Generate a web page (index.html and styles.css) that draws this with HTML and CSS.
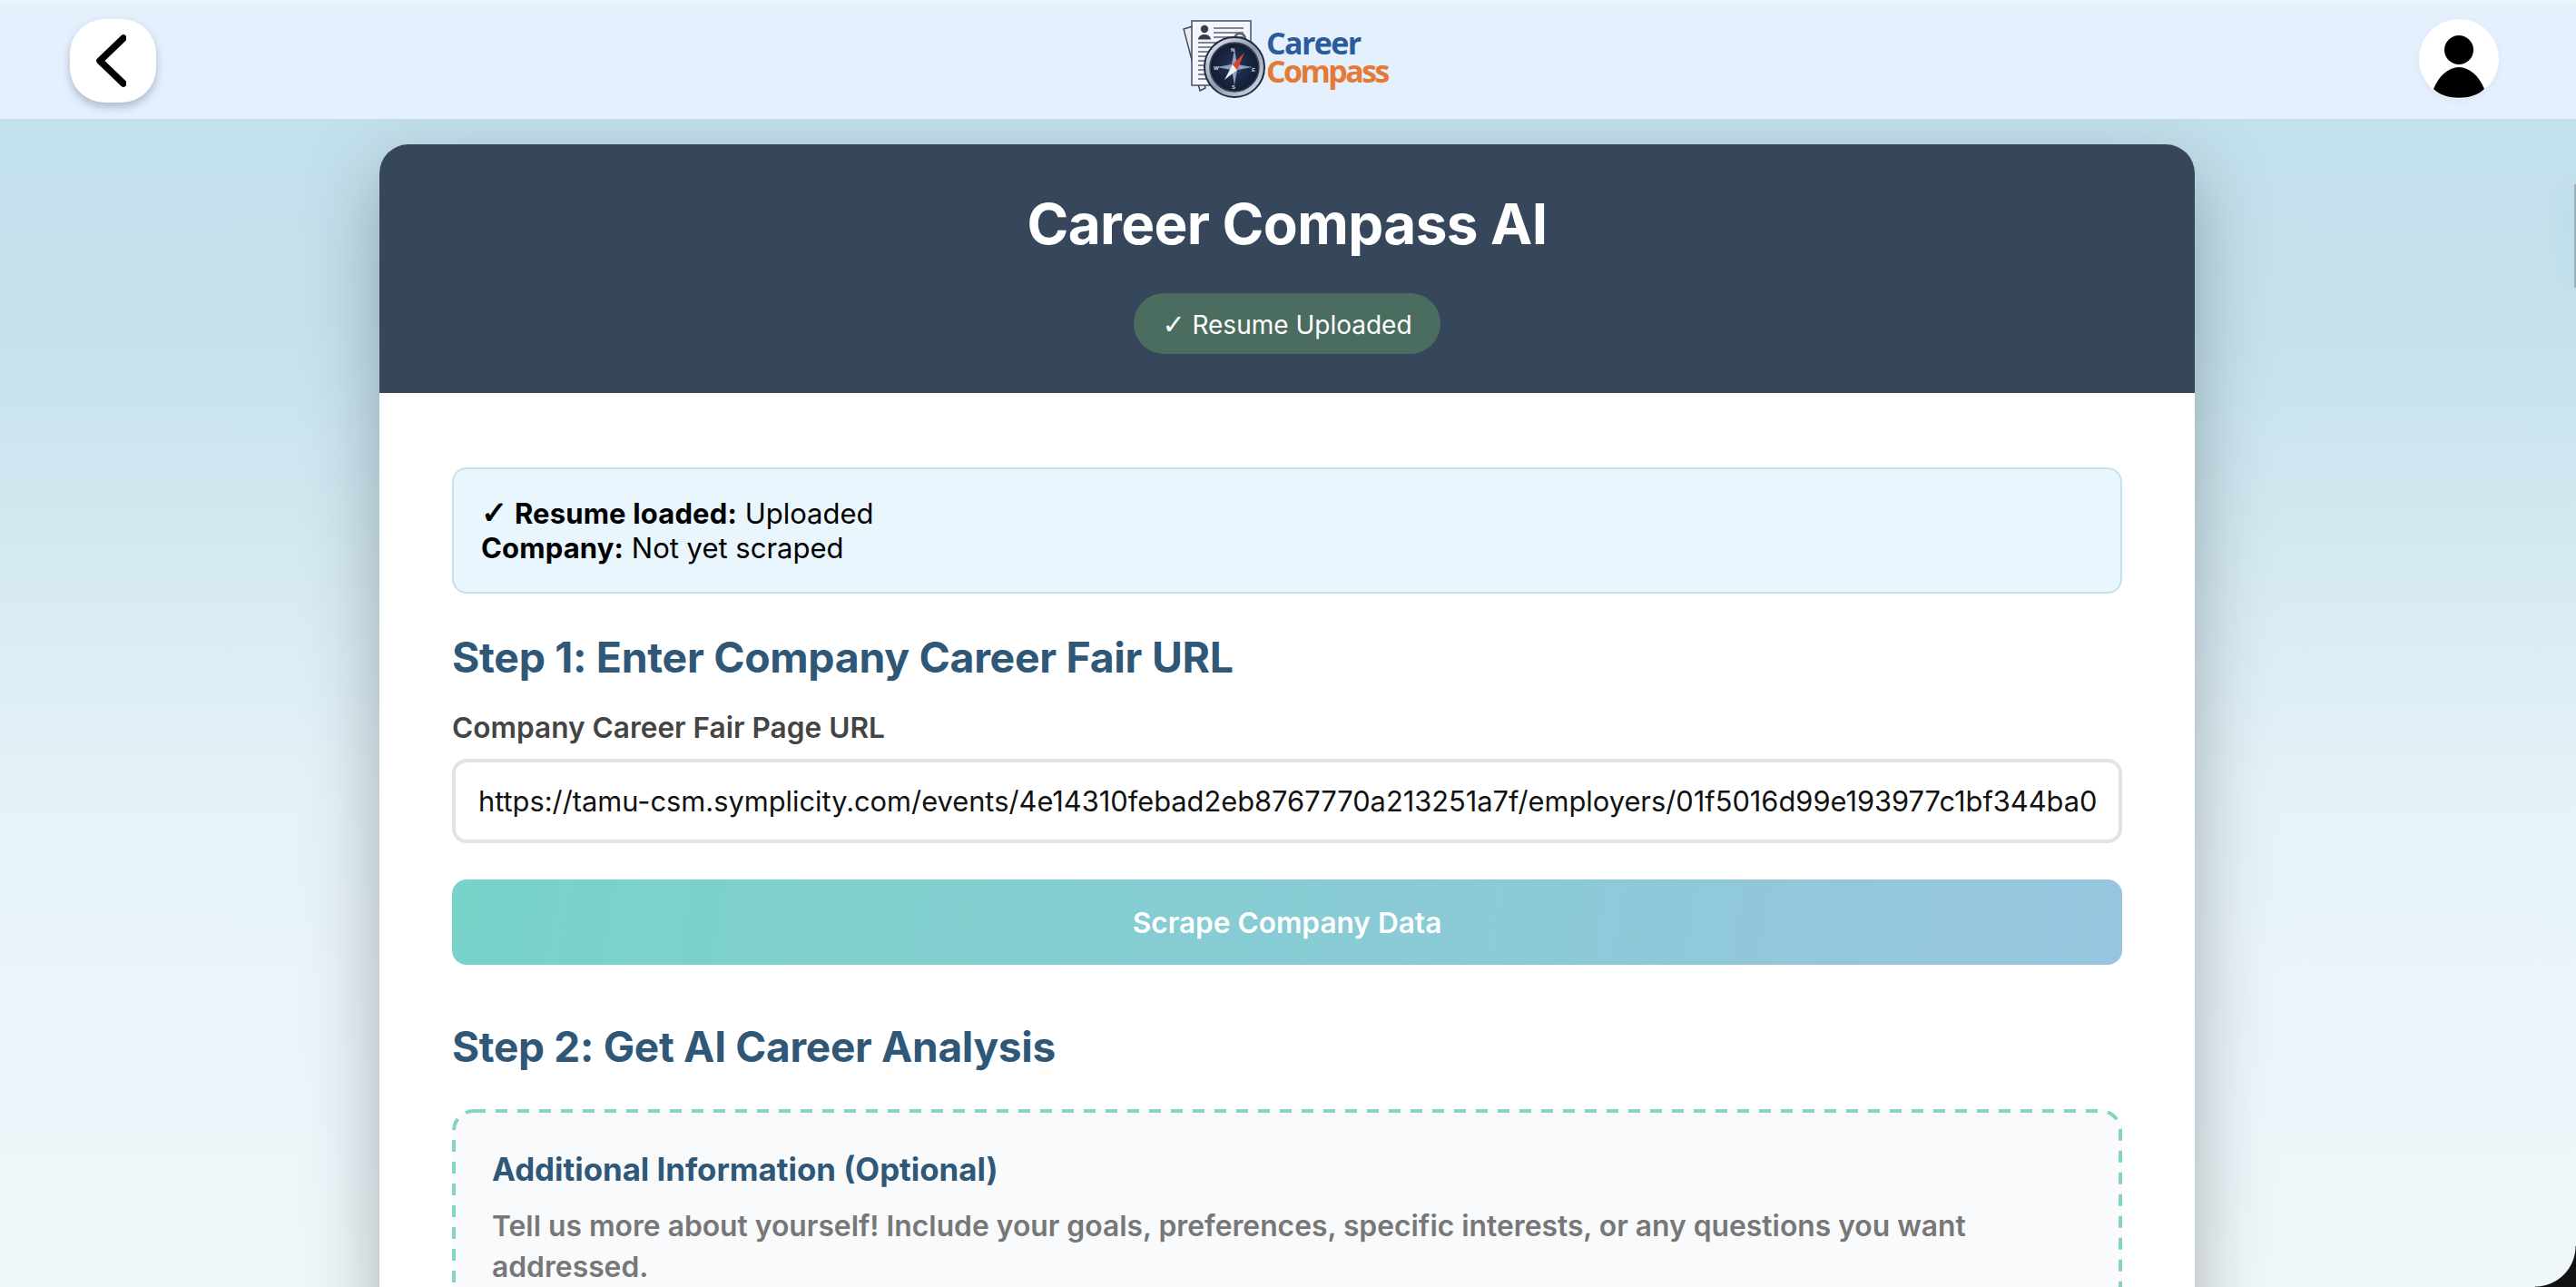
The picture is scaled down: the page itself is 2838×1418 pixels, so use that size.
FILE: index.html
```html
<!DOCTYPE html>
<html lang="en">
<head>
<meta charset="utf-8">
<title>Career Compass AI</title>
<link rel="stylesheet" href="styles.css">
</head>
<body>
<header class="topbar">
  <button class="back" aria-label="Back">
    <svg width="36" height="58" viewBox="0 0 36 58"><path d="M33 4 L7 29 L33 54" fill="none" stroke="#000" stroke-width="7.5" stroke-linecap="round" stroke-linejoin="round"/></svg>
  </button>
  <div class="logo">
    <svg class="logo-art" width="92" height="88" viewBox="0 0 92 88">
      <defs>
        <linearGradient id="bezel" x1="0" y1="0" x2="1" y2="1">
          <stop offset="0" stop-color="#f2f4f7"/>
          <stop offset="0.5" stop-color="#8f98a8"/>
          <stop offset="1" stop-color="#e3e7ec"/>
        </linearGradient>
        <radialGradient id="face">
          <stop offset="0" stop-color="#3a5d94"/>
          <stop offset="0.35" stop-color="#1d2d4d"/>
          <stop offset="1" stop-color="#141d33"/>
        </radialGradient>
      </defs>
      <path d="M1 10 L11 7 L25 75 L19 78 Z" fill="#e9ecf3" stroke="#3b4459" stroke-width="1.4"/>
      <rect x="10" y="1" width="65" height="71" fill="#f4f6fb" stroke="#3b4459" stroke-width="1.4"/>
      <circle cx="24" cy="10" r="4.2" fill="#353d50"/>
      <path d="M17 21.5 C17 14 31 14 31 21.5 Z" fill="#353d50"/>
      <path d="M34 9 H67 M34 14 H67 M34 19 H67 M17 25 H62 M17 30 H50 M17 35 H42 M17 40 H36 M17 45 H32 M17 50 H30 M17 55 H28 M17 60 H28 M17 65 H30" stroke="#7d8596" stroke-width="2"/>
      <circle cx="63" cy="21" r="6" fill="none" stroke="#5b6474" stroke-width="2.5"/>
      <circle cx="57" cy="52" r="33" fill="url(#bezel)" stroke="#1e2a44" stroke-width="2"/>
      <circle cx="57" cy="52" r="27" fill="url(#face)" stroke="#39435a" stroke-width="1.5"/>
      <path d="M57 32 L60 49 L77 52 L60 55 L57 72 L54 55 L37 52 L54 49 Z" fill="#b9c6da" opacity="0.75"/>
      <path d="M46 66 L55 49 L60 55 Z" fill="#eef1f5"/>
      <path d="M68 36 L55 49 L60 55 Z" fill="#d9402f"/>
      <text class="logo-mark" x="53" y="35">N</text>
      <text class="logo-mark" x="34" y="55">W</text>
      <text class="logo-mark" x="76" y="57">E</text>
      <text class="logo-mark" x="54" y="76">S</text>
    </svg>
    <div class="logo-text">
      <span class="logo-career">Career</span>
      <span class="logo-compass">Compass</span>
    </div>
  </div>
  <button class="avatar" aria-label="Profile">
    <svg width="88" height="88" viewBox="0 0 88 88"><circle cx="44" cy="34" r="16"/><path d="M16 77 C22 62 33 53 44 53 C55 53 66 62 72 77 C60 90 28 90 16 77 Z"/></svg>
  </button>
</header>
<main class="stage">
  <section class="card">
    <div class="card-head">
      <h1 class="title">Career Compass AI</h1>
      <span class="badge"><span class="check">✓</span> Resume Uploaded</span>
    </div>
    <div class="card-body">
      <div class="info">
        <div><strong><span class="check">✓</span> Resume loaded:</strong> Uploaded</div>
        <div><strong>Company:</strong> Not yet scraped</div>
      </div>
      <h2 class="step step-one">Step 1: Enter Company Career Fair URL</h2>
      <label class="field-label" for="url">Company Career Fair Page URL</label>
      <input class="url" id="url" type="text" value="https://tamu-csm.symplicity.com/events/4e14310febad2eb8767770a213251a7f/employers/01f5016d99e193977c1bf344ba0c2d11">
      <button class="scrape">Scrape Company Data</button>
      <h2 class="step step-two">Step 2: Get AI Career Analysis</h2>
      <div class="extra">
        <svg class="extra-dash" width="1840" height="400" viewBox="0 0 1840 400"><rect x="2" y="2" width="1836" height="396" rx="22" fill="none" stroke="#85d3c2" stroke-width="4" stroke-dasharray="13 11"/></svg>
        <h3 class="extra-title">Additional Information (Optional)</h3>
        <p class="extra-text">Tell us more about yourself! Include your goals, preferences, specific interests, or any questions you want addressed.</p>
      </div>
    </div>
  </section>
</main>
<div class="edge-handle"></div>
<div class="window-corner"></div>
</body>
</html>
```
FILE: styles.css
```css
* { box-sizing: border-box; }
html, body { height: 100%; }
body {
  margin: 0;
  overflow: hidden;
  font-family: Inter, "Liberation Sans", sans-serif;
  background: linear-gradient(180deg, #c2e0ec 0%, #c4e1ec 25%, #e6f2f8 62%, #f0f7fa 100%);
}
.check { font-family: "DejaVu Sans", sans-serif; }
.topbar {
  height: 131px;
  background: #e4f0fd;
  border-top: 3px solid #eef3fa;
  display: flex;
  align-items: center;
  justify-content: space-between;
  padding: 0 85px 0 77px;
  position: relative;
  z-index: 1;
}
.back {
  width: 95px;
  height: 92px;
  border: 0;
  border-radius: 38px;
  background: #fff;
  box-shadow: 0 5px 10px rgba(60, 60, 80, 0.3);
  display: flex;
  align-items: center;
  justify-content: center;
  padding: 0 8px 0 0;
}
.logo {
  display: flex;
  align-items: center;
  width: 227px;
  margin-right: 4px;
  margin-top: -3px;
}
.logo-art { flex: none; }
.logo-mark {
  font-family: "Liberation Sans", sans-serif;
  font-size: 6px;
  font-weight: 700;
  fill: #d5dbe4;
}
.logo-text {
  display: flex;
  flex-direction: column;
  margin-top: -5px;
  font-family: "Open Sans", sans-serif;
  font-weight: 700;
  font-size: 34px;
  line-height: 31px;
  letter-spacing: -1.6px;
}
.logo-career { color: #2a5b9b; }
.logo-compass { color: #e47a35; letter-spacing: -2.6px; }
.avatar {
  width: 88px;
  height: 88px;
  border: 0;
  padding: 0;
  border-radius: 50%;
  background: #fff;
  overflow: hidden;
  margin-top: -4px;
  box-shadow: 0 2px 8px rgba(120, 120, 160, 0.08);
}
.avatar svg { display: block; }
.stage {
  display: flex;
  justify-content: center;
  padding-top: 28px;
}
.card {
  width: 2000px;
  margin-right: 2px;
  border-radius: 32px 32px 0 0;
  background: #fff;
  box-shadow: 0 30px 80px rgba(30, 40, 50, 0.34);
}
.card-head {
  height: 274px;
  background: #36475b;
  border-radius: 32px 32px 0 0;
  color: #fff;
  text-align: center;
  padding-top: 53px;
}
.title {
  margin: 0;
  font-size: 62px;
  line-height: 70px;
  font-weight: 700;
  letter-spacing: -0.6px;
}
.badge {
  display: inline-block;
  margin-top: 41px;
  height: 67px;
  line-height: 69px;
  padding: 0 31px;
  border-radius: 34px;
  background: #4b6d5f;
  font-size: 28px;
}
.badge .check { font-size: 30px; }
.card-body { padding: 82px 80px 0; }
.info {
  height: 139px;
  padding: 30px 30px;
  background: #e9f6fd;
  border: 2px solid #c5e1ec;
  border-radius: 16px;
  font-size: 31px;
  line-height: 38px;
  color: #000;
}
.info strong { font-weight: 700; letter-spacing: 0.15px; }
.info .check {
  font-size: 35px;
  line-height: 30px;
  -webkit-text-stroke: 1px #000;
}
.step {
  margin: 0;
  color: #2f5878;
  line-height: 56px;
  font-weight: 700;
  letter-spacing: -0.3px;
}
.step-one { margin-top: 42px; font-size: 46.4px; }
.field-label {
  display: block;
  margin-top: 32px;
  color: #444;
  font-size: 31.6px;
  line-height: 36px;
  font-weight: 600;
}
.url {
  display: block;
  width: 100%;
  height: 93px;
  margin-top: 16px;
  padding: 0 25px;
  border: 4px solid #e3e3e3;
  border-radius: 16px;
  background: #fff;
  color: #111;
  font-family: Inter, sans-serif;
  font-size: 30.8px;
}
.scrape {
  display: block;
  width: 100%;
  height: 94px;
  margin-top: 40px;
  padding-top: 2px;
  border: 0;
  border-radius: 16px;
  background: linear-gradient(100deg, #78d3c9 0%, #97c5df 100%);
  color: #fff;
  font-family: Inter, sans-serif;
  font-size: 31.6px;
  font-weight: 600;
}
.step-two { margin-top: 62px; font-size: 46px; }
.extra {
  position: relative;
  margin-top: 41px;
  height: 400px;
  padding: 44px 44px 0;
  background: #f9fafc;
  border-radius: 24px;
}
.extra-dash {
  position: absolute;
  left: 0;
  top: 0;
}
.extra-title {
  margin: 0;
  color: #2f5878;
  font-family: Inter, sans-serif;
  font-size: 34.8px;
  line-height: 44px;
  font-weight: 700;
}
.extra-text {
  margin: 18px 0 0;
  color: #777;
  font-family: Inter, sans-serif;
  font-size: 31.8px;
  line-height: 45px;
  font-weight: 600;
}
.edge-handle {
  position: fixed;
  right: 0;
  top: 203px;
  width: 2px;
  height: 114px;
  background: #9fb0ba;
  box-shadow: 0 0 30px rgba(60, 80, 100, 0.3);
}
.window-corner {
  position: fixed;
  right: 0;
  bottom: 0;
  width: 45px;
  height: 45px;
  background: radial-gradient(circle at 0 0, transparent 44px, #111 45px);
}
```
